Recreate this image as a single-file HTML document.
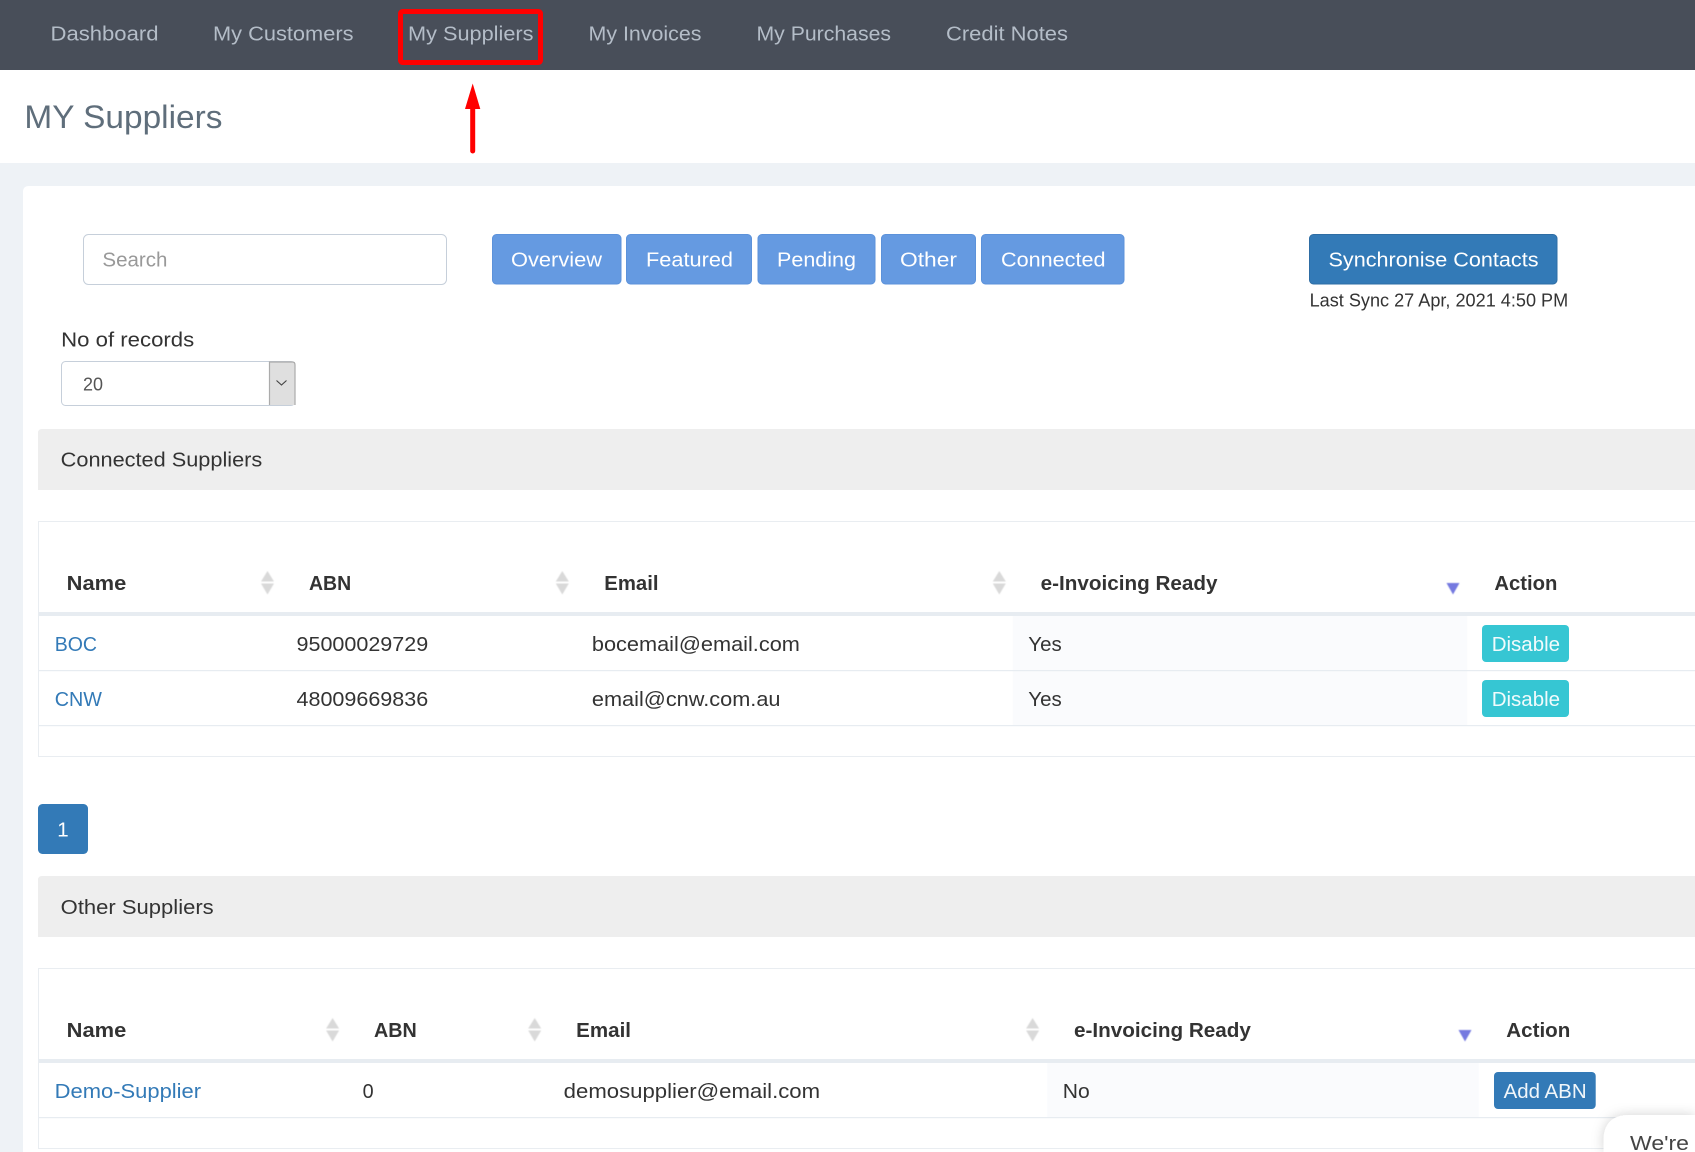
<!DOCTYPE html>
<html lang="en"><head><meta charset="utf-8"><title>My Suppliers</title>
<style>
html,body{margin:0;padding:0;width:1695px;height:1152px;overflow:hidden;background:#eef2f6}
svg{display:block;position:absolute;left:0;top:0}
text{font-family:"Liberation Sans",Arial,sans-serif;font-size:20.5px;fill:#333}
.nav{fill:#b4bdc8}
.w{fill:#fff}
.h{font-weight:bold;font-size:20px;fill:#333}
.l{fill:#337ab7}
.s{fill:#fff;fill-opacity:.93}
</style></head><body>
<svg width="1695" height="1152" viewBox="0 0 1695 1152" xmlns="http://www.w3.org/2000/svg">
<defs>
<filter id="sh" x="-30%" y="-30%" width="160%" height="160%"><feDropShadow dx="0" dy="0" stdDeviation="6" flood-color="#000" flood-opacity=".18"/></filter>
<filter id="bl" x="-30%" y="-30%" width="160%" height="160%"><feGaussianBlur stdDeviation=".5"/></filter>
<g id="sort" filter="url(#bl)"><polygon points="0,-17 6.5,-6.5 -6.5,-6.5" fill="#d9d9d9"/><polygon points="0,6.5 6.5,-4.5 -6.5,-4.5" fill="#d9d9d9"/></g>
<g id="desc" filter="url(#bl)"><polygon points="-6.5,-5 6.5,-5 0,6.5" fill="#7579e0"/></g>
</defs>
<!-- page -->
<rect width="1695" height="1152" fill="#eef2f6"/>
<rect y="70" width="1695" height="93" fill="#fff"/>
<rect width="1695" height="70" fill="#484e59"/>
<!-- nav -->
<text class="nav" x="50.5" y="40.5" textLength="108" lengthAdjust="spacingAndGlyphs">Dashboard</text>
<text class="nav" x="213" y="40.5" textLength="140.5" lengthAdjust="spacingAndGlyphs">My Customers</text>
<text class="nav" x="408" y="40.5" textLength="125.5" lengthAdjust="spacingAndGlyphs">My Suppliers</text>
<text class="nav" x="588.5" y="40.5" textLength="113" lengthAdjust="spacingAndGlyphs">My Invoices</text>
<text class="nav" x="756.5" y="40.5" textLength="134.5" lengthAdjust="spacingAndGlyphs">My Purchases</text>
<text class="nav" x="946" y="40.5" textLength="122" lengthAdjust="spacingAndGlyphs">Credit Notes</text>
<rect x="400.5" y="11.5" width="140" height="51" rx="2" fill="none" stroke="#f00" stroke-width="5"/>
<!-- arrow -->
<polygon points="472.7,83.5 480.3,109 465,109" fill="#f00"/>
<line x1="472.7" y1="106" x2="472.7" y2="151" stroke="#f00" stroke-width="5" stroke-linecap="round"/>
<!-- title -->
<text x="24.4" y="128" textLength="198" lengthAdjust="spacingAndGlyphs" style="font-size:32.5px;fill:#5f6e7b">MY Suppliers</text>
<!-- card -->
<path d="M23 192q0-6 6-6H1695V1152H23Z" fill="#fff"/>
<!-- search -->
<rect x="83.5" y="234.5" width="363" height="50" rx="5" fill="#fff" stroke="#c6cfda"/>
<text x="102.4" y="266.5" textLength="65" lengthAdjust="spacingAndGlyphs" style="fill:#999">Search</text>
<!-- filter buttons -->
<g fill="#659ae1" stroke="#5c92da">
<rect x="492.5" y="234.5" width="128.5" height="49.5" rx="4"/>
<rect x="626.5" y="234.5" width="125" height="49.5" rx="4"/>
<rect x="758" y="234.5" width="117" height="49.5" rx="4"/>
<rect x="881.5" y="234.5" width="94" height="49.5" rx="4"/>
<rect x="981.5" y="234.5" width="142.5" height="49.5" rx="4"/>
</g>
<text class="w" x="511" y="266.5" textLength="91" lengthAdjust="spacingAndGlyphs">Overview</text>
<text class="w" x="646" y="266.5" textLength="87" lengthAdjust="spacingAndGlyphs">Featured</text>
<text class="w" x="777" y="266.5" textLength="79" lengthAdjust="spacingAndGlyphs">Pending</text>
<text class="w" x="900" y="266.5" textLength="57" lengthAdjust="spacingAndGlyphs">Other</text>
<text class="w" x="1001" y="266.5" textLength="104.5" lengthAdjust="spacingAndGlyphs">Connected</text>
<rect x="1309.5" y="234.5" width="247.5" height="49.5" rx="4" fill="#337ab7" stroke="#2e6da4"/>
<text class="w" x="1328.5" y="266.5" textLength="210" lengthAdjust="spacingAndGlyphs">Synchronise Contacts</text>
<text x="1309.6" y="306.5" textLength="258.6" lengthAdjust="spacingAndGlyphs" style="font-size:18px">Last Sync 27 Apr, 2021 4:50 PM</text>
<!-- records -->
<text x="61.2" y="346.5" textLength="133" lengthAdjust="spacingAndGlyphs" style="font-size:20px">No of records</text>
<rect x="61.5" y="361.5" width="233.5" height="44" rx="4" fill="#fff" stroke="#c6cfda"/>
<text x="83" y="390.5" textLength="20" lengthAdjust="spacingAndGlyphs" style="font-size:18px;fill:#555">20</text>
<rect x="269.5" y="362" width="25.5" height="43" fill="#dfdfdf"/>
<path d="M269.5 405V362H292.5Q295 362 295 365V405" fill="none" stroke="#ababab" stroke-width="1.2"/>
<path d="M276.5 380.5L281.5 385L286.5 380.5" fill="none" stroke="#444" stroke-width="1.1"/>
<!-- connected -->
<path d="M38 433q0-4 4-4H1695V490H38Z" fill="#eee"/>
<text x="60.7" y="466.5" textLength="201.6" lengthAdjust="spacingAndGlyphs" style="font-size:20px">Connected Suppliers</text>
<path d="M1695 521.5H38.5V756.5H1695" fill="#fff" stroke="#e9edf1"/>
<text class="h" x="66.7" y="590" textLength="59.6" lengthAdjust="spacingAndGlyphs">Name</text>
<use href="#sort" x="267.5" y="588"/>
<text class="h" x="309" y="590" textLength="42.2" lengthAdjust="spacingAndGlyphs">ABN</text>
<use href="#sort" x="562.3" y="588"/>
<text class="h" x="604.3" y="590" textLength="54.2" lengthAdjust="spacingAndGlyphs">Email</text>
<use href="#sort" x="999.3" y="588"/>
<text class="h" x="1040.7" y="590" textLength="176.8" lengthAdjust="spacingAndGlyphs">e-Invoicing Ready</text>
<use href="#desc" x="1453" y="588"/>
<text class="h" x="1494.4" y="590" textLength="63" lengthAdjust="spacingAndGlyphs">Action</text>
<rect x="39" y="612" width="1656" height="4" fill="#e7ecf1"/>
<rect x="1012.7" y="616" width="454.5" height="54" fill="#fafbfd"/>
<rect x="1012.7" y="671" width="454.5" height="54" fill="#fafbfd"/>
<rect x="39" y="670" width="1656" height="1.2" fill="#e7ecf1"/>
<rect x="39" y="725" width="1656" height="1.2" fill="#e7ecf1"/>
<text class="l" x="54.7" y="651" textLength="42.3" lengthAdjust="spacingAndGlyphs">BOC</text>
<text x="296.5" y="651" textLength="131.7" lengthAdjust="spacingAndGlyphs">95000029729</text>
<text x="591.9" y="651" textLength="208" lengthAdjust="spacingAndGlyphs">bocemail@email.com</text>
<text x="1028.3" y="651" textLength="33.4" lengthAdjust="spacingAndGlyphs">Yes</text>
<rect x="1482" y="625" width="87" height="37" rx="4" fill="#36c6d3"/>
<text class="s" x="1491.7" y="651" textLength="68.4" lengthAdjust="spacingAndGlyphs">Disable</text>
<text class="l" x="54.7" y="706" textLength="47.2" lengthAdjust="spacingAndGlyphs">CNW</text>
<text x="296.5" y="706" textLength="131.7" lengthAdjust="spacingAndGlyphs">48009669836</text>
<text x="591.9" y="706" textLength="188.6" lengthAdjust="spacingAndGlyphs">email@cnw.com.au</text>
<text x="1028.3" y="706" textLength="33.4" lengthAdjust="spacingAndGlyphs">Yes</text>
<rect x="1482" y="680" width="87" height="37" rx="4" fill="#36c6d3"/>
<text class="s" x="1491.7" y="706" textLength="68.4" lengthAdjust="spacingAndGlyphs">Disable</text>
<!-- pagination -->
<rect x="38" y="804" width="50" height="50" rx="4.5" fill="#337ab7"/>
<text class="w" x="57.3" y="836.5" textLength="11.4" lengthAdjust="spacingAndGlyphs">1</text>
<!-- other -->
<path d="M38 880q0-4 4-4H1695V937H38Z" fill="#eee"/>
<text x="60.7" y="914" textLength="153" lengthAdjust="spacingAndGlyphs" style="font-size:20px">Other Suppliers</text>
<path d="M1695 968.5H38.5V1148.5H1695" fill="#fff" stroke="#e9edf1"/>
<text class="h" x="66.7" y="1037" textLength="59.6" lengthAdjust="spacingAndGlyphs">Name</text>
<use href="#sort" x="332.6" y="1035"/>
<text class="h" x="374" y="1037" textLength="42.8" lengthAdjust="spacingAndGlyphs">ABN</text>
<use href="#sort" x="534.7" y="1035"/>
<text class="h" x="576.2" y="1037" textLength="54.8" lengthAdjust="spacingAndGlyphs">Email</text>
<use href="#sort" x="1032.6" y="1035"/>
<text class="h" x="1074" y="1037" textLength="176.9" lengthAdjust="spacingAndGlyphs">e-Invoicing Ready</text>
<use href="#desc" x="1465" y="1035"/>
<text class="h" x="1506.3" y="1037" textLength="64" lengthAdjust="spacingAndGlyphs">Action</text>
<rect x="39" y="1059" width="1656" height="4" fill="#e7ecf1"/>
<rect x="1047.2" y="1063" width="431.6" height="54" fill="#fafbfd"/>
<rect x="39" y="1117" width="1656" height="1.2" fill="#e7ecf1"/>
<text class="l" x="54.7" y="1098" textLength="146.4" lengthAdjust="spacingAndGlyphs">Demo-Supplier</text>
<text x="362.6" y="1098" textLength="11" lengthAdjust="spacingAndGlyphs">0</text>
<text x="563.7" y="1098" textLength="256.4" lengthAdjust="spacingAndGlyphs">demosupplier@email.com</text>
<text x="1062.8" y="1098" textLength="27" lengthAdjust="spacingAndGlyphs">No</text>
<rect x="1494" y="1072" width="101.7" height="37" rx="4" fill="#337ab7"/>
<text class="s" x="1503.6" y="1098" textLength="83" lengthAdjust="spacingAndGlyphs">Add ABN</text>
<!-- chat -->
<path d="M1603.5 1152V1141q0-26 26-26H1695V1152Z" fill="#fff" filter="url(#sh)"/>
<text x="1630" y="1150" textLength="59" lengthAdjust="spacingAndGlyphs" style="font-size:20px;fill:#444">We're</text>
</svg>
</body></html>
